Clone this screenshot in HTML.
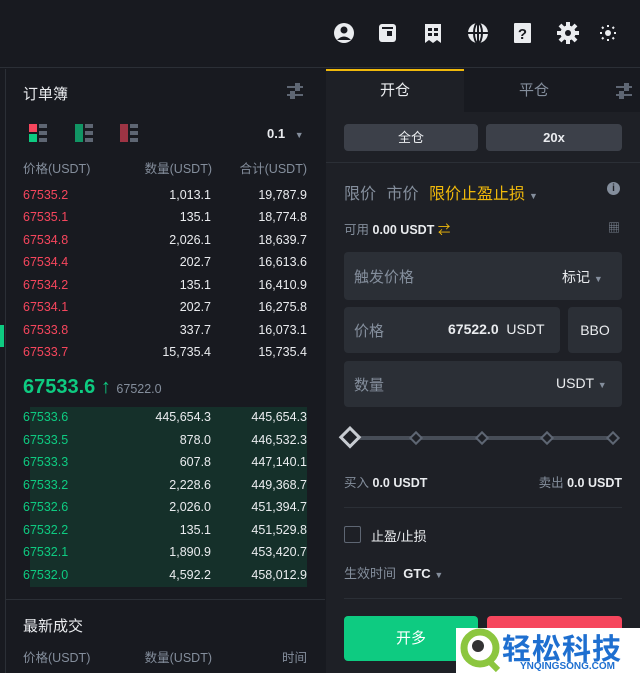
<!DOCTYPE html>
<html><head><meta charset="utf-8"><style>
*{margin:0;padding:0;box-sizing:border-box}
body{width:640px;height:673px;overflow:hidden;background:#181a20;font-family:"Liberation Sans","Noto Sans CJK SC",sans-serif;color:#eaecef;position:relative;font-size:13px}
.a{position:absolute}
.top{left:0;top:0;width:640px;height:68px;background:#181a20;border-bottom:1px solid #2b2f36}
.left{left:5px;top:69px;width:320px;height:604px;background:#181a20;border-left:1px solid #2b2f36}
.right{left:326px;top:69px;width:314px;height:604px;background:#1e2026}
.g{color:#848e9c}
.row{position:absolute;left:23px;width:284px;height:22px;font-size:12.5px}
.row span{position:absolute;top:0}
.p{left:0}.q{right:96px}.t{right:0;color:#eaecef}
.q{color:#eaecef}
.box{position:absolute;background:#2b2f36;border-radius:4px}
</style></head><body>
<div class="a top"></div>
<svg class="a" style="left:332px;top:20px" width="300" height="26" viewBox="0 0 300 26">
<g fill="#eaecef">
<circle cx="12" cy="13" r="10"/><circle cx="12" cy="10" r="3.5" fill="#181a20"/><path d="M5 20 Q12 13 19 20 Z" fill="#181a20"/>
<rect x="47" y="4" width="17" height="18" rx="3"/><rect x="55" y="11" width="5" height="5" fill="#181a20"/><rect x="50" y="7" width="11" height="2" fill="#181a20"/>
<path d="M93 4 h16 v19 l-4 -3 -4 3 -4 -3 -4 3 Z"/><rect x="96" y="8" width="4" height="3" fill="#181a20"/><rect x="102" y="8" width="4" height="3" fill="#181a20"/><rect x="96" y="13" width="4" height="3" fill="#181a20"/><rect x="102" y="13" width="4" height="3" fill="#181a20"/>
<circle cx="146" cy="13" r="10"/><path d="M146 3 v20 M136 13 h20" stroke="#181a20" stroke-width="2"/><ellipse cx="146" cy="13" rx="4" ry="10" fill="none" stroke="#181a20" stroke-width="2"/>
<rect x="182" y="3" width="17" height="20" rx="1"/><text x="190.5" y="19" font-size="15" font-weight="bold" fill="#181a20" text-anchor="middle" font-family="Liberation Sans">?</text>
<circle cx="236" cy="13" r="7.5"/><g stroke="#eaecef" stroke-width="4"><path d="M236 2v22M225 13h22M228 5l16 16M244 5l-16 16"/></g><circle cx="236" cy="13" r="3" fill="#181a20"/>
<circle cx="276" cy="13" r="3"/><g stroke="#eaecef" stroke-width="2"><path d="M276 5v2M276 19v2M268 13h2M282 13h2M270 7l1.5 1.5M282 7l-1.5 1.5M270 19l1.5-1.5M282 19l-1.5-1.5"/></g>
</g></svg>

<div class="a left"></div>
<div class="a" style="left:0;top:325px;width:4px;height:22px;background:#0ecb81"></div>
<div class="a" style="left:23px;top:83px;font-size:15px">订单簿</div>
<svg class="a" style="left:286px;top:82px" width="18" height="18"><g stroke="#5e6673" stroke-width="2"><path d="M1 5h16M1 13h16"/></g><rect x="9" y="1" width="5" height="8" fill="#5e6673"/><rect x="4" y="9" width="5" height="8" fill="#5e6673"/></svg>
<svg class="a" style="left:29px;top:124px" width="120" height="20">
<rect x="0" y="0" width="8" height="8" fill="#f6465d"/><rect x="0" y="10" width="8" height="8" fill="#0ecb81"/><rect x="10" y="0" width="8" height="4" fill="#5e6673"/><rect x="10" y="7" width="8" height="4" fill="#5e6673"/><rect x="10" y="14" width="8" height="4" fill="#5e6673"/>
<rect x="46" y="0" width="8" height="18" fill="#0ecb81" opacity=".7"/><rect x="56" y="0" width="8" height="4" fill="#5e6673"/><rect x="56" y="7" width="8" height="4" fill="#5e6673"/><rect x="56" y="14" width="8" height="4" fill="#5e6673"/>
<rect x="91" y="0" width="8" height="18" fill="#f6465d" opacity=".6"/><rect x="101" y="0" width="8" height="4" fill="#5e6673"/><rect x="101" y="7" width="8" height="4" fill="#5e6673"/><rect x="101" y="14" width="8" height="4" fill="#5e6673"/>
</svg>
<div class="a" style="left:267px;top:126px;font-size:13px;font-weight:bold">0.1 <span class="g" style="font-size:9px;margin-left:6px">▼</span></div>
<div class="row g" style="top:158px"><span class="p">价格(USDT)</span><span class="q g" style="right:95px;color:#848e9c">数量(USDT)</span><span class="t g" style="color:#848e9c">合计(USDT)</span></div>

<div class="a" style="left:30px;top:407px;width:277px;height:180px;background:#15302a"></div>
<div class="row" style="top:188px"><span class="p" style="color:#f6465d">67535.2</span><span class="q">1,013.1</span><span class="t">19,787.9</span></div>
<div class="row" style="top:210px"><span class="p" style="color:#f6465d">67535.1</span><span class="q">135.1</span><span class="t">18,774.8</span></div>
<div class="row" style="top:233px"><span class="p" style="color:#f6465d">67534.8</span><span class="q">2,026.1</span><span class="t">18,639.7</span></div>
<div class="row" style="top:255px"><span class="p" style="color:#f6465d">67534.4</span><span class="q">202.7</span><span class="t">16,613.6</span></div>
<div class="row" style="top:278px"><span class="p" style="color:#f6465d">67534.2</span><span class="q">135.1</span><span class="t">16,410.9</span></div>
<div class="row" style="top:300px"><span class="p" style="color:#f6465d">67534.1</span><span class="q">202.7</span><span class="t">16,275.8</span></div>
<div class="row" style="top:323px"><span class="p" style="color:#f6465d">67533.8</span><span class="q">337.7</span><span class="t">16,073.1</span></div>
<div class="row" style="top:345px"><span class="p" style="color:#f6465d">67533.7</span><span class="q">15,735.4</span><span class="t">15,735.4</span></div>
<div class="a" style="left:23px;top:376px;font-size:20px;font-weight:bold;color:#0ecb81">67533.6 ↑ <span style="font-size:12.5px;font-weight:normal;color:#848e9c">67522.0</span></div>
<div class="row" style="top:410px"><span class="p" style="color:#0ecb81">67533.6</span><span class="q">445,654.3</span><span class="t">445,654.3</span></div>
<div class="row" style="top:433px"><span class="p" style="color:#0ecb81">67533.5</span><span class="q">878.0</span><span class="t">446,532.3</span></div>
<div class="row" style="top:455px"><span class="p" style="color:#0ecb81">67533.3</span><span class="q">607.8</span><span class="t">447,140.1</span></div>
<div class="row" style="top:478px"><span class="p" style="color:#0ecb81">67533.2</span><span class="q">2,228.6</span><span class="t">449,368.7</span></div>
<div class="row" style="top:500px"><span class="p" style="color:#0ecb81">67532.6</span><span class="q">2,026.0</span><span class="t">451,394.7</span></div>
<div class="row" style="top:523px"><span class="p" style="color:#0ecb81">67532.2</span><span class="q">135.1</span><span class="t">451,529.8</span></div>
<div class="row" style="top:545px"><span class="p" style="color:#0ecb81">67532.1</span><span class="q">1,890.9</span><span class="t">453,420.7</span></div>
<div class="row" style="top:568px"><span class="p" style="color:#0ecb81">67532.0</span><span class="q">4,592.2</span><span class="t">458,012.9</span></div>
<div class="a" style="left:6px;top:599px;width:319px;height:1px;background:#2b2f36"></div>
<div class="a" style="left:23px;top:615px;font-size:15px">最新成交</div>
<div class="row g" style="top:647px"><span class="p">价格(USDT)</span><span class="q g" style="right:95px;color:#848e9c">数量(USDT)</span><span class="t g" style="color:#848e9c">时间</span></div>

<div class="a right"></div>
<div class="a" style="left:326px;top:69px;width:314px;height:43px;background:#181a20"></div>
<div class="a" style="left:326px;top:69px;width:138px;height:43px;background:#1e2026;border-top:2px solid #f0b90b;text-align:center;line-height:40px;font-size:15px">开仓</div>
<div class="a g" style="left:464px;top:69px;width:140px;height:43px;text-align:center;line-height:43px;font-size:15px">平仓</div>
<svg class="a" style="left:615px;top:82px" width="18" height="18"><g stroke="#5e6673" stroke-width="2"><path d="M1 5h16M1 13h16"/></g><rect x="9" y="1" width="5" height="8" fill="#5e6673"/><rect x="4" y="9" width="5" height="8" fill="#5e6673"/></svg>
<div class="box" style="left:344px;top:124px;width:134px;height:27px;background:#3c4049;text-align:center;line-height:27px;font-size:13px">全仓</div>
<div class="box" style="left:486px;top:124px;width:136px;height:27px;background:#3c4049;text-align:center;line-height:27px;font-size:13px;font-weight:bold">20x</div>
<div class="a" style="left:326px;top:162px;width:314px;height:1px;background:#2b2f36"></div>
<div class="a" style="left:344px;top:180px;font-size:16px;word-spacing:6px"><span class="g">限价</span> <span class="g">市价</span> <span style="color:#f0b90b">限价止盈止损</span><span class="g" style="font-size:9px;margin-left:4px">▼</span></div>
<div class="a" style="left:607px;top:182px;width:13px;height:13px;border-radius:50%;background:#848e9c;color:#1e2026;font-size:10px;font-weight:bold;text-align:center;line-height:13px">i</div>
<div class="a" style="left:344px;top:219px;font-size:12.5px"><span class="g">可用</span> <b>0.00 USDT</b> <span style="color:#f0b90b">⇄</span></div>
<div class="a g" style="left:608px;top:219px;font-size:12px">▦</div>
<div class="box" style="left:344px;top:252px;width:278px;height:48px"></div>
<div class="a g" style="left:354px;top:266px;font-size:15px">触发价格</div>
<div class="a" style="left:562px;top:267px;font-size:14px">标记 <span class="g" style="font-size:9px">▼</span></div>
<div class="box" style="left:344px;top:307px;width:216px;height:46px"></div>
<div class="a g" style="left:354px;top:320px;font-size:15px">价格</div>
<div class="a" style="left:448px;top:321px;font-size:14px"><b>67522.0</b>&nbsp; USDT</div>
<div class="box" style="left:568px;top:307px;width:54px;height:46px;text-align:center;line-height:46px;font-size:14px">BBO</div>
<div class="box" style="left:344px;top:361px;width:278px;height:46px"></div>
<div class="a g" style="left:354px;top:374px;font-size:15px">数量</div>
<div class="a" style="left:556px;top:375px;font-size:14px">USDT <span class="g" style="font-size:9px">▼</span></div>
<svg class="a" style="left:338px;top:426px" width="290" height="24"><path d="M14 12H280" stroke="#474d57" stroke-width="4"/>
<rect x="5" y="5" width="13" height="13" transform="rotate(45 12 12)" fill="#1e2026" stroke="#c7cbd1" stroke-width="3"/>
<g fill="#1e2026" stroke="#5e6673" stroke-width="2"><rect x="74" y="8" width="8" height="8" transform="rotate(45 78 12)"/><rect x="140" y="8" width="8" height="8" transform="rotate(45 144 12)"/><rect x="205" y="8" width="8" height="8" transform="rotate(45 209 12)"/><rect x="271" y="8" width="8" height="8" transform="rotate(45 275 12)"/></g></svg>
<div class="a" style="left:344px;top:472px;font-size:12.5px"><span class="g">买入</span> <b>0.0 USDT</b></div>
<div class="a" style="right:18px;top:472px;font-size:12.5px"><span class="g">卖出</span> <b>0.0 USDT</b></div>
<div class="a" style="left:344px;top:507px;width:278px;height:1px;background:#2b2f36"></div>
<div class="a" style="left:344px;top:526px;width:17px;height:17px;border:1px solid #5e6673;border-radius:2px"></div>
<div class="a" style="left:371px;top:526px;font-size:13px">止盈/止损</div>
<div class="a" style="left:344px;top:563px;font-size:13px"><span class="g">生效时间</span>&nbsp; <b>GTC</b> <span class="g" style="font-size:9px">▼</span></div>
<div class="a" style="left:344px;top:598px;width:278px;height:1px;background:#2b2f36"></div>
<div class="box" style="left:344px;top:616px;width:134px;height:45px;background:#0ecb81;text-align:center;line-height:45px;font-size:15px;color:#fff">开多</div>
<div class="box" style="left:487px;top:616px;width:135px;height:45px;background:#f6465d"></div>
<div class="a" style="left:456px;top:628px;width:184px;height:45px;background:#fff"></div>
<svg class="a" style="left:458px;top:628px" width="44" height="45"><circle cx="22" cy="20" r="16" fill="none" stroke="#8cc63f" stroke-width="7"/><circle cx="20" cy="18" r="6" fill="#333"/><path d="M30 32 l10 10" stroke="#8cc63f" stroke-width="6"/></svg>
<div class="a" style="left:502px;top:626px;font-size:29px;font-weight:bold;color:#1e6fd0;letter-spacing:1px">轻松科技</div>
<div class="a" style="left:520px;top:661px;font-size:10px;font-weight:bold;color:#1e6fd0">YNQINGSONG.COM</div>
</body></html>
